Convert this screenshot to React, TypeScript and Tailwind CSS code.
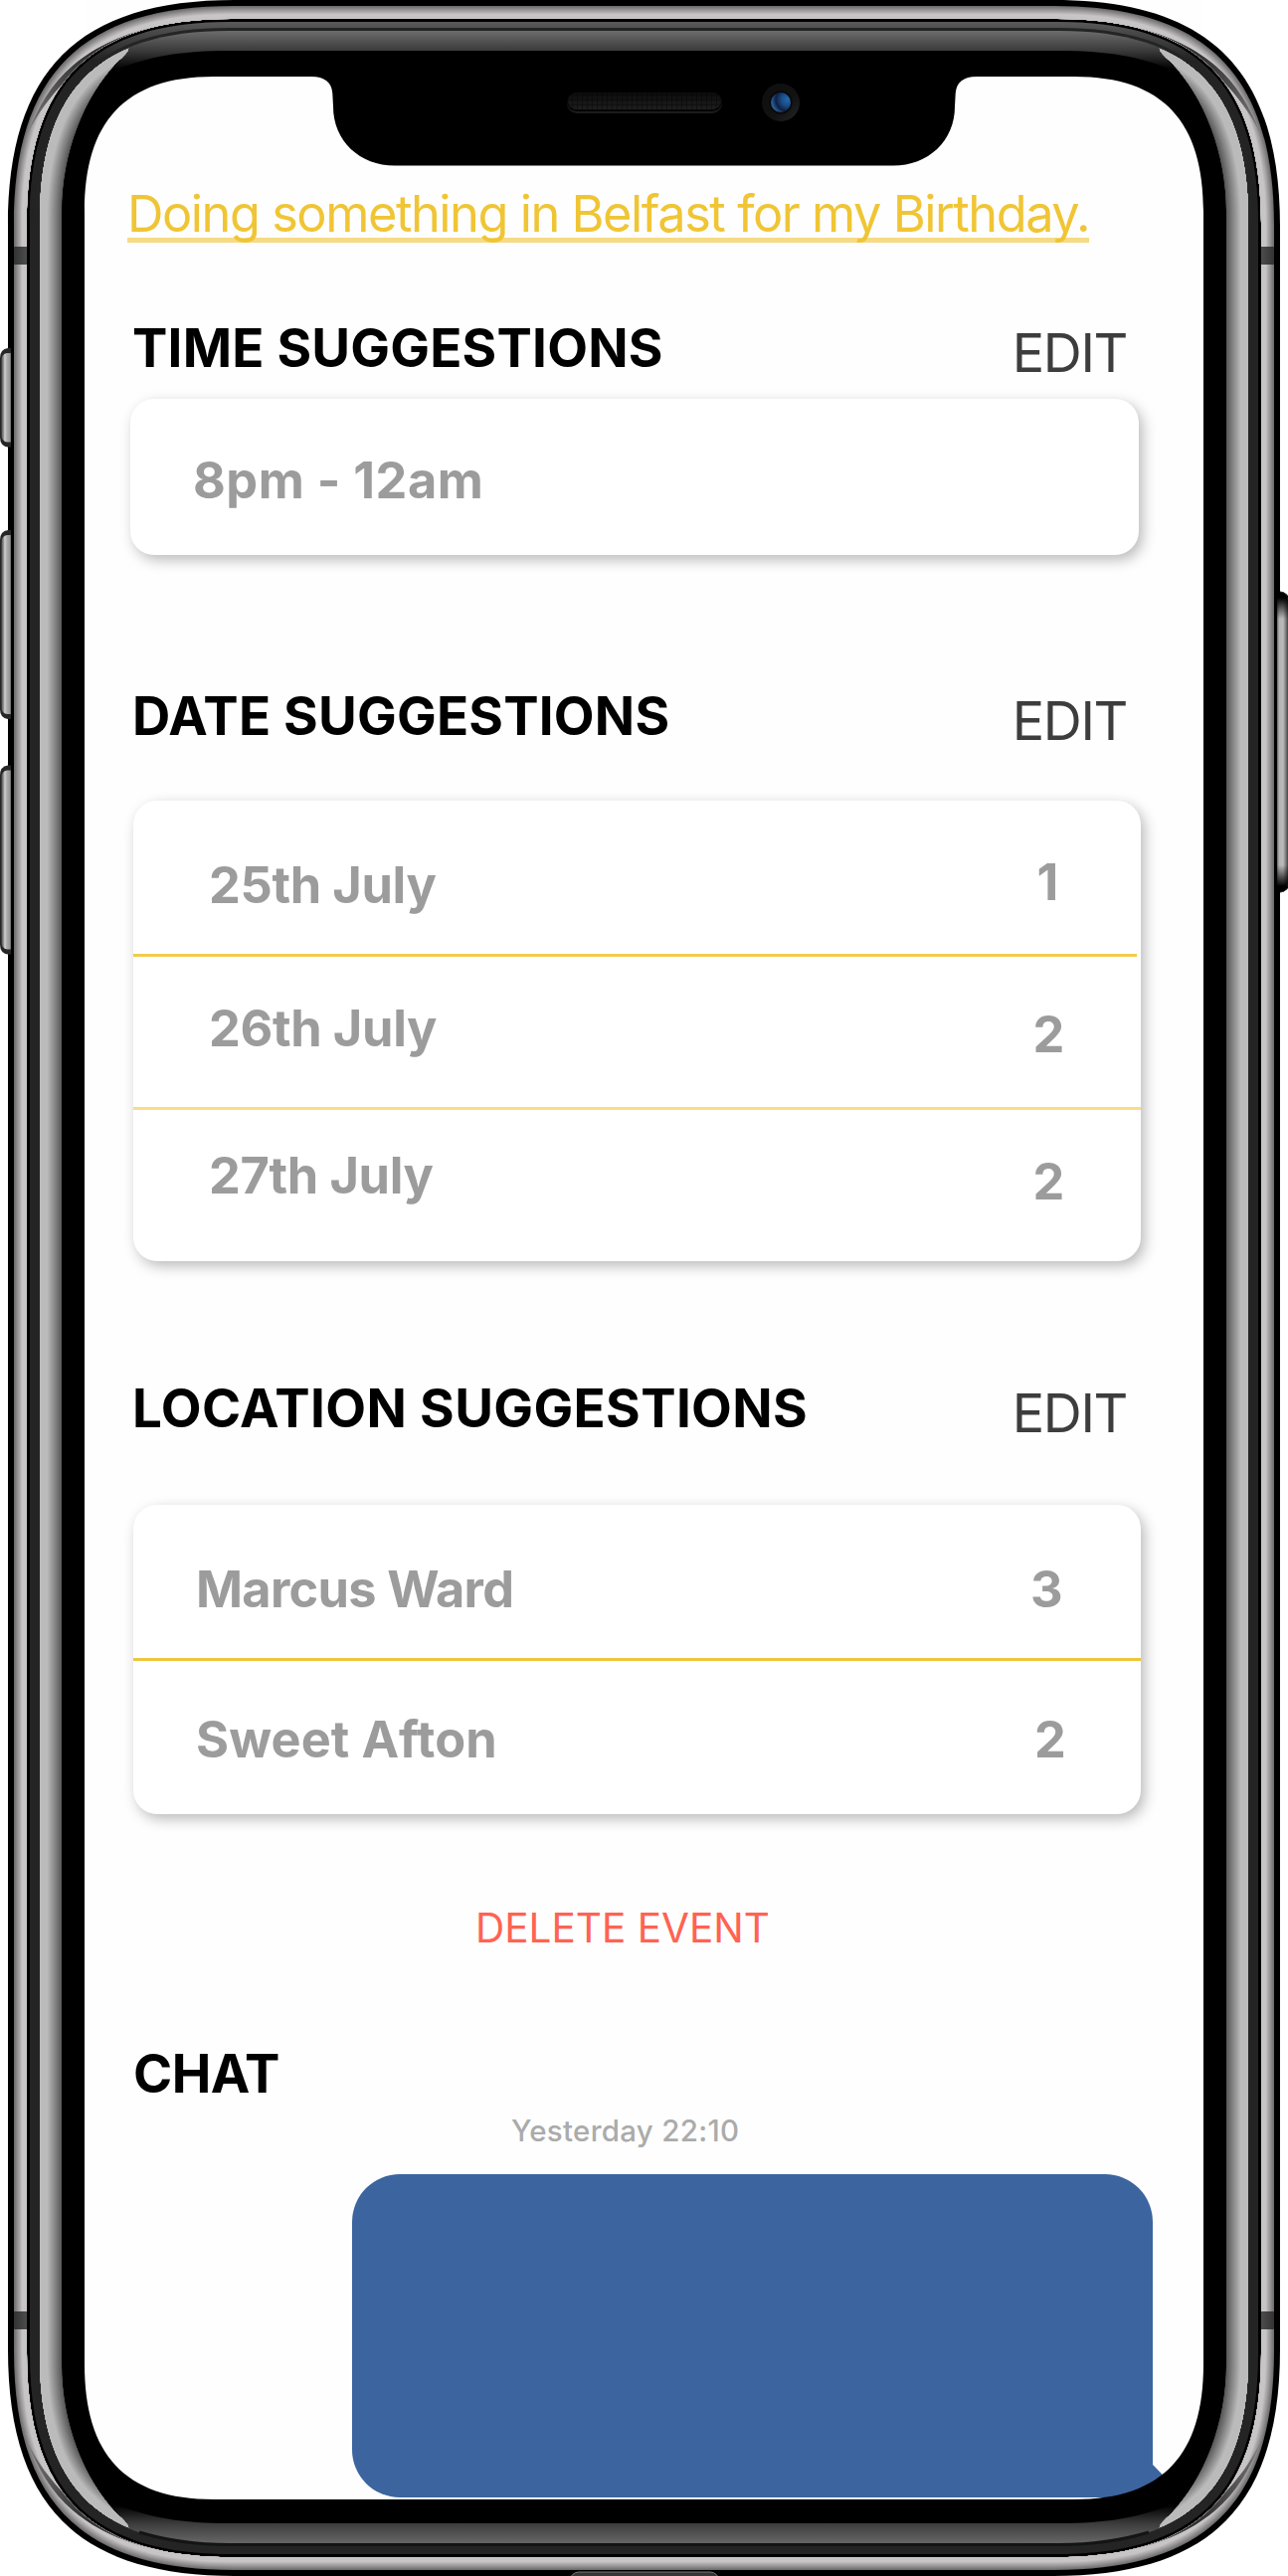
import type { ReactNode } from "react";

const W = 1295;
const H = 2590;

/* Continuous-curvature rounded rectangle, inset by d from the body outline. */
function ring(d: number, length = 228 - d * 1.2, k = 0.69) {
  const l = 8 + d;
  const r = 1287 - d;
  const t = d;
  const b = H - d;
  const L = length;
  const h = L * (1 - k);
  return [
    `M${l},${t + L}`,
    `C${l},${t + h} ${l + h},${t} ${l + L},${t}`,
    `H${r - L}`,
    `C${r - h},${t} ${r},${t + h} ${r},${t + L}`,
    `V${b - L}`,
    `C${r},${b - h} ${r - h},${b} ${r - L},${b}`,
    `H${l + L}`,
    `C${l + h},${b} ${l},${b - h} ${l},${b - L}`,
    "Z",
  ].join(" ");
}

function mix(a: number[], b: number[], t: number) {
  return `rgb(${a.map((v, i) => Math.round(v + (b[i] - v) * t)).join(",")})`;
}

/* Display opening including the sensor housing cut-out. */
const SCREEN =
  "M85,213 C85,123 125,77 215,77 H313 Q333,77 334.3,94 L335,107 C335,142 362,166.5 397,166.5 H898 C933,166.5 960,142 960,107 L960.7,94 Q962,77 982,77 H1080 C1170,77 1210,123 1210,213 V2377 C1210,2467 1170,2513 1080,2513 H215 C125,2513 85,2467 85,2377 Z";

/* Left-hand glass reflection, upper half; its outer side is cut by the lip. */
const SIDE_GLOW = "M20,1295 V20 H126 L129,47 Q131,51 118,62 C84,97 62,155 62,213 V1295 Z";

const MIRRORS = ["", "matrix(-1 0 0 1 1295 0)", "matrix(1 0 0 -1 0 2590)", "matrix(-1 0 0 -1 1295 2590)"];

const KEYS = [
  [350, 99.5],
  [533, 190],
  [769.5, 190],
];

const CRESCENT =
  "M162,26 C125,33 97,46 73,66 C52,84 38,108 28,134 C39,112 50,98 66,81 L82,72 C102,52 128,37 162,26 Z";

function PhoneFrame() {
  const rim = Array.from({ length: 13 }, (_, i) => i);
  const glow = Array.from({ length: 23 }, (_, i) => 24 - i);
  return (
    <svg
      viewBox={`0 0 ${W} ${H}`}
      className="pointer-events-none absolute inset-0 h-full w-full"
      aria-hidden="true"
    >
      <defs>
        <linearGradient id="crescent" x1="28" y1="130" x2="160" y2="26" gradientUnits="userSpaceOnUse">
          <stop offset="0" stopColor="#777" />
          <stop offset="0.35" stopColor="#484848" />
          <stop offset="0.6" stopColor="#2c2c2c" />
          <stop offset="1" stopColor="#555" />
        </linearGradient>
        <linearGradient id="topLip" x1="0" y1="22" x2="0" y2="60" gradientUnits="userSpaceOnUse">
          <stop offset="0" stopColor="#5a5a5a" />
          <stop offset="0.25" stopColor="#4a4a4a" />
          <stop offset="1" stopColor="#232323" />
        </linearGradient>
        <linearGradient id="topGlow" x1="0" y1="31" x2="0" y2="70" gradientUnits="userSpaceOnUse">
          <stop offset="0" stopColor="#6c6c6c" />
          <stop offset="0.5" stopColor="#3c3c3c" />
          <stop offset="1" stopColor="#000" />
        </linearGradient>
        <linearGradient id="bottomGlow" x1="0" y1="2557" x2="0" y2="2519" gradientUnits="userSpaceOnUse">
          <stop offset="0" stopColor="#666" />
          <stop offset="0.5" stopColor="#3e3e3e" />
          <stop offset="1" stopColor="#000" />
        </linearGradient>
        <linearGradient id="keyLeft">
          <stop offset="0" stopColor="#555" />
          <stop offset="0.2" stopColor="#8a8a8a" />
          <stop offset="0.35" stopColor="#cfcfcf" />
          <stop offset="0.6" stopColor="#a8a8a8" />
          <stop offset="0.85" stopColor="#999" />
          <stop offset="1" stopColor="#666" />
        </linearGradient>
        <linearGradient id="keyRight">
          <stop offset="0" stopColor="#666" />
          <stop offset="0.2" stopColor="#b5b5b5" />
          <stop offset="0.55" stopColor="#bbb" />
          <stop offset="0.75" stopColor="#8a8a8a" />
          <stop offset="1" stopColor="#444" />
        </linearGradient>
        <linearGradient id="keyShade" x1="0" y1="0" x2="0" y2="1">
          <stop offset="0" stopColor="#000" />
          <stop offset="0.02" stopColor="#000" />
          <stop offset="0.09" stopColor="#000" stopOpacity="0" />
          <stop offset="0.91" stopColor="#000" stopOpacity="0" />
          <stop offset="0.98" stopColor="#000" />
          <stop offset="1" stopColor="#000" />
        </linearGradient>
        <linearGradient id="band">
          <stop offset="0" stopColor="#333" />
          <stop offset="1" stopColor="#4d4d4d" />
        </linearGradient>
        <linearGradient id="port" x1="0" y1="0" x2="0" y2="1">
          <stop offset="0" stopColor="#333" />
          <stop offset="1" stopColor="#4a4a4a" />
        </linearGradient>
        <radialGradient id="lens" cx="0.85" cy="0.35" r="0.8">
          <stop offset="0" stopColor="#2268ad" />
          <stop offset="0.4" stopColor="#1a4c86" />
          <stop offset="0.75" stopColor="#101f42" />
          <stop offset="1" stopColor="#285a90" />
        </radialGradient>
        <linearGradient id="lensRing" x1="0" y1="0" x2="1" y2="1">
          <stop offset="0" stopColor="#0e0e0e" />
          <stop offset="0.6" stopColor="#121212" />
          <stop offset="1" stopColor="#262626" />
        </linearGradient>
        <linearGradient id="grille" x1="0" y1="0" x2="0" y2="1">
          <stop offset="0" stopColor="#0c0c0c" />
          <stop offset="1" stopColor="#1e1e1e" />
        </linearGradient>
        <pattern id="mesh" width="5" height="5" patternUnits="userSpaceOnUse">
          <path d="M0,0 H5 M0,0 V5" stroke="#000" strokeOpacity="0.45" strokeWidth="1.6" />
        </pattern>
        <clipPath id="sideClip">
          <path d={SIDE_GLOW} />
        </clipPath>
        <clipPath id="glassClip">
          <path d={ring(31)} />
        </clipPath>
        <clipPath id="lipClip">
          <path d={ring(32)} />
        </clipPath>
        <clipPath id="rimClip">
          <path clipRule="evenodd" d={`${ring(6)} ${ring(19)}`} />
        </clipPath>
        <clipPath id="topHalf">
          <rect x="0" y="0" width={W} height="230" />
        </clipPath>
      </defs>

      <rect x="1270" y="594.5" width="26" height="303" rx="9" fill="#000" />
      <path d={`${ring(0)} ${SCREEN}`} fillRule="evenodd" fill="#000" />

      {/* volume, mute and power keys */}
      {KEYS.map(([y, h]) => (
        <g key={y}>
          <path
            d={`M11,${y} H8 Q0,${y + 1} 0,${y + 10} V${y + h - 10} Q0,${y + h - 1} 8,${y + h} H11 Z`}
            fill="#262626"
          />
          <path
            d={`M11,${y + 5} H7 Q1.5,${y + 6} 1.5,${y + 12} V${y + h - 12} Q1.5,${y + h - 6} 7,${y + h - 5} H11 Z`}
            fill="url(#keyLeft)"
          />
        </g>
      ))}
      <path d="M1284,595 H1287 Q1295,596 1295,604 V888 Q1295,896 1287,897 H1284 Z" fill="url(#keyRight)" />
      <path d="M1284,595 H1287 Q1295,596 1295,604 V888 Q1295,896 1287,897 H1284 Z" fill="url(#keyShade)" />

      {/* metallic rim */}
      <g fillRule="evenodd">
        {rim.map((i) => (
          <path
            key={i}
            d={`${ring(6 + i)} ${ring(19)}`}
            fill={mix([112, 110, 110], [200, 197, 199], Math.min(1, i / 8))}
          />
        ))}
      </g>
      <g clipPath="url(#rimClip)">
        {MIRRORS.map((m) => (
          <path key={m} transform={m || undefined} d={CRESCENT} fill="url(#crescent)" />
        ))}
      </g>
      {["", MIRRORS[1]].map((m) => (
        <g key={m} fill="url(#band)" transform={m || undefined}>
          <rect x="14" y="248" width="13" height="18" />
          <rect x="14" y="2324" width="13" height="18" />
        </g>
      ))}

      {/* inner lip */}
      <path d={`${ring(22)} ${ring(32)}`} fillRule="evenodd" fill="#242424" />
      <g clipPath="url(#topHalf)">
        <path d={`${ring(22)} ${ring(28)}`} fillRule="evenodd" fill="url(#topLip)" />
      </g>

      {/* glass edge highlights */}
      <g clipPath="url(#glassClip)">
        <path d="M112,25 H1183 V72 C1145,56 1110,51 1065,51 H230 C185,51 150,56 112,72 Z" fill="url(#topGlow)" />
        <path
          d="M112,2563 H1183 V2516 C1145,2532 1110,2537 1065,2537 H230 C185,2537 150,2532 112,2516 Z"
          fill="url(#bottomGlow)"
        />
      </g>
      <path
        d="M140,2546 C170,2555 200,2558.5 230,2558.5 H1065 C1095,2558.5 1125,2555 1155,2546"
        stroke="#141414"
        strokeWidth="3"
        fill="none"
      />
      {MIRRORS.map((m) => (
        <g key={m} transform={m || undefined}>
          <g clipPath="url(#sideClip)">
            <g clipPath="url(#lipClip)" fill="none">
              {glow.map((w) => (
                <path
                  key={w}
                  d={ring(32)}
                  strokeWidth={w * 2}
                  stroke={mix([187, 187, 187], [90, 90, 90], Math.min(1, Math.max(0, (w - 8) / 14)))}
                />
              ))}
            </g>
          </g>
        </g>
      ))}

      {/* speaker and camera */}
      <rect x="570" y="94" width="156" height="20" rx="10" fill="#1c1c1c" />
      <rect x="570" y="92.5" width="156" height="19.5" rx="9.7" fill="#050505" />
      <rect x="571" y="93" width="154" height="17" rx="8.5" fill="url(#grille)" />
      <rect x="571" y="93" width="154" height="17" rx="8.5" fill="url(#mesh)" />
      <circle cx="785" cy="103" r="19" fill="url(#lensRing)" />
      <circle cx="785" cy="103" r="11.5" fill="#080808" />
      <circle cx="785" cy="103" r="10" fill="url(#lens)" />

      {/* charging port */}
      <rect x="573" y="2586" width="150" height="20" rx="9" fill="url(#port)" stroke="#777" strokeWidth="1" />
    </svg>
  );
}

function Header({ title, className }: { title: string; className: string }) {
  return (
    <div className={`flex items-start justify-between pr-[77px] ${className}`}>
      <h2 className="text-[53px] leading-[60px] font-bold text-black">{title}</h2>
      <button className="mt-[5px] text-[54px] leading-[60px] tracking-[-1.4px] text-[#3d3d3d]">EDIT</button>
    </div>
  );
}

function Card({ className, children }: { className: string; children: ReactNode }) {
  return (
    <div
      className={`rounded-[24px] bg-white text-[50.5px] leading-[60px] font-bold text-[#9c9c9c] shadow-[4px_5px_14px_rgba(0,0,0,0.27)] ${className}`}
    >
      {children}
    </div>
  );
}

function Row({
  label,
  count,
  className,
  countClassName,
}: {
  label: string;
  count: string;
  className: string;
  countClassName: string;
}) {
  return (
    <div className={`flex items-start justify-between ${className}`}>
      <span>{label}</span>
      <span className={`text-right ${countClassName}`}>{count}</span>
    </div>
  );
}

export default function App() {
  return (
    <div className="relative h-[2590px] w-[1295px] overflow-hidden bg-white font-[Inter,sans-serif]">
      <main className="ml-[85px] flex h-[2513px] w-[1125px] flex-col overflow-hidden bg-[#fefefe] pt-[185px]">
        <a className="ml-[43px] self-start text-[50.5px] leading-[60px] whitespace-nowrap tracking-[-1.47px] text-[#f0c535] underline decoration-[#f6da84] decoration-[5px] underline-offset-[6px] [text-decoration-skip-ink:none]">
          Doing something in Belfast for my Birthday.
        </a>

        <Header title="TIME SUGGESTIONS" className="mt-[75px] pl-[48px] tracking-[0.2px]" />
        <Card className="mt-[16px] ml-[46px] h-[157px] w-[1014px] pt-[52px] pl-[63px] tracking-[0.5px]">
          8pm - 12am
        </Card>

        <Header title="DATE SUGGESTIONS" className="mt-[132px] pl-[48px] tracking-[0.2px]" />
        <Card className="mt-[50px] ml-[49px] h-[463px] w-[1013px]">
          <Row
            label="25th July"
            count="1"
            className="h-[154px] pt-[55px] pr-[83px] pl-[76px] tracking-[-0.35px]"
            countClassName="-mt-[3px]"
          />
          <div className="h-[3px] w-[1009px] bg-[#f2cb4c]" />
          <Row
            label="26th July"
            count="2"
            className="h-[151px] pt-[42px] pr-[77px] pl-[76px] tracking-[-0.35px]"
            countClassName="mt-[6px]"
          />
          <div className="h-[3px] bg-[#f8dc88]" />
          <Row
            label="27th July"
            count="2"
            className="pt-[36px] pr-[77px] pl-[76px] tracking-[-0.35px]"
            countClassName="mt-[6px]"
          />
        </Card>

        <Header title="LOCATION SUGGESTIONS" className="mt-[118px] pl-[48px] tracking-[0.35px]" />
        <Card className="mt-[62px] ml-[49px] h-[311px] w-[1013px]">
          <Row
            label="Marcus Ward"
            count="3"
            className="h-[154px] pt-[55px] pr-[79px] pl-[63px] tracking-[-0.7px]"
            countClassName=""
          />
          <div className="h-[3px] bg-[#efc53f]" />
          <Row
            label="Sweet Afton"
            count="2"
            className="pt-[49px] pr-[75px] pl-[63px] tracking-[0.1px]"
            countClassName=""
          />
        </Card>

        <button className="mt-[85px] ml-[393px] self-start text-[40.5px] leading-[60px] text-[#ff6351]">
          DELETE EVENT
        </button>

        <h2 className="mt-[86px] ml-[49px] text-[53px] leading-[60px] font-bold tracking-[-0.55px] text-black">
          CHAT
        </h2>
        <p className="mt-[7px] ml-[429px] text-[29.5px] leading-[40px] font-medium tracking-[0.28px] text-[#ababab]">
          Yesterday 22:10
        </p>
        <div className="relative mt-[24px] ml-[269px] h-[325px] w-[805px] rounded-[48px] rounded-br-none bg-[#3c649f]">
          <svg viewBox="0 0 20 50" className="absolute -right-[19px] bottom-0 h-[50px] w-[20px]" aria-hidden="true">
            <path d="M0,16 Q8,24 18,35 L20,50 H0 Z" fill="#3c649f" />
          </svg>
        </div>
      </main>
      <PhoneFrame />
    </div>
  );
}
